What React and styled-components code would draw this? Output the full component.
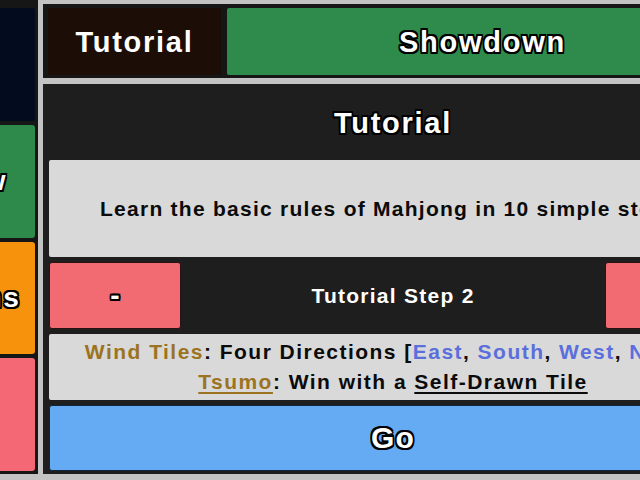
import React from 'react';
import styled, { createGlobalStyle, css } from 'styled-components';

const GlobalStyle = createGlobalStyle`
  html, body {
    margin: 0;
    padding: 0;
    width: 640px;
    height: 480px;
    overflow: hidden;
    background: #c3c3c3;
    font-family: "Liberation Sans", Arial, sans-serif;
  }
`;

const outline = css`
  text-shadow:
    -1.6px -1.6px 0 #000, 1.6px -1.6px 0 #000,
    -1.6px 1.6px 0 #000, 1.6px 1.6px 0 #000,
    0 -1.8px 0 #000, 0 1.8px 0 #000,
    -1.8px 0 0 #000, 1.8px 0 0 #000;
`;

const Page = styled.div`
  display: flex;
  gap: 5px;
  height: 480px;
  margin-left: -130px;
`;

const Sidebar = styled.nav`
  flex: 0 0 168px;
  height: 474px;
  box-sizing: border-box;
  padding: 8px 3px 3px;
  background: #161616;
  display: flex;
  flex-direction: column;
  gap: 4px;
`;

const SideButton = styled.button`
  flex: 1;
  border: none;
  border-radius: 3px;
  background: ${({ color }) => color};
  color: #fff;
  font-family: inherit;
  font-weight: bold;
  font-size: 28px;
  letter-spacing: 0.06em;
  ${outline}
`;

const Column = styled.div`
  flex: 0 0 700px;
  padding-top: 4px;
  display: flex;
  flex-direction: column;
  gap: 6px;
`;

const TabBar = styled.div`
  height: 74px;
  box-sizing: border-box;
  padding: 4px 5px 3px;
  background: #161616;
  display: flex;
  gap: 6px;
`;

const Tab = styled.div`
  flex: ${({ grow }) => (grow ? 1 : '0 0 173px')};
  background: ${({ color }) => color};
  border-radius: 2px;
  display: flex;
  align-items: center;
  justify-content: center;
  padding-top: 2px;
  color: #fff;
  font-weight: bold;
  font-size: 29px;
  letter-spacing: 0.06em;
  ${({ stroked }) => stroked && outline}
`;

const Panel = styled.main`
  height: 390px;
  box-sizing: border-box;
  padding: 0 6px 3px;
  background: #1e1e1e;
  display: flex;
  flex-direction: column;
  gap: 5px;
`;

const Heading = styled.h1`
  margin: 0;
  height: 71px;
  padding-top: 8px;
  box-sizing: border-box;
  display: flex;
  align-items: center;
  justify-content: center;
  color: #fff;
  font-size: 29px;
  letter-spacing: 0.06em;
  ${outline}
`;

const InfoBox = styled.div`
  height: ${({ h }) => h}px;
  background: #d9d9d9;
  border-radius: 2px;
  display: flex;
  flex-direction: column;
  align-items: center;
  justify-content: center;
  text-align: center;
  color: #0b0b0b;
  font-weight: bold;
  font-size: 21px;
  line-height: 30px;
  letter-spacing: ${({ spacing }) => spacing || '0.06em'};
  white-space: nowrap;
`;

const StepRow = styled.div`
  height: 67px;
  display: flex;
  align-items: stretch;
`;

const StepButton = styled.button`
  flex: 0 0 132px;
  border: 1px solid #2a1313;
  border-radius: 3px;
  background: #f26a72;
  color: #fff;
  font-family: inherit;
  font-weight: bold;
  font-size: 28px;
  ${outline}
`;

const StepLabel = styled.div`
  flex: 1;
  display: flex;
  align-items: center;
  justify-content: center;
  color: #fff;
  font-weight: bold;
  font-size: 21px;
  letter-spacing: 0.06em;
`;

const Key = styled.span`
  color: #9b7321;
  ${({ underline }) => underline && css`
    text-decoration: underline;
    text-decoration-thickness: 2px;
    text-underline-offset: 3px;
  `}
`;

const Dir = styled.span`
  color: #5b6fdc;
`;

const Term = styled.span`
  text-decoration: underline;
  text-decoration-thickness: 2px;
  text-underline-offset: 3px;
`;

const GoButton = styled.button`
  height: 66px;
  border: 1px solid #10263d;
  border-radius: 3px;
  background: #65abf3;
  color: #fff;
  font-family: inherit;
  font-weight: bold;
  font-size: 30px;
  letter-spacing: 0.04em;
  ${outline}
`;

const sideItems = [
  { label: '', color: '#020c1e' },
  { label: 'Review', color: '#2e8a4b' },
  { label: 'Missions', color: '#f7920d' },
  { label: '', color: '#f36874' },
];

export default function App() {
  return (
    <>
      <GlobalStyle />
      <Page>
        <Sidebar>
          {sideItems.map((item, i) => (
            <SideButton key={i} color={item.color}>{item.label}</SideButton>
          ))}
        </Sidebar>
        <Column>
          <TabBar>
            <Tab color="#1c0e06">Tutorial</Tab>
            <Tab color="#2e8b4b" grow stroked>Showdown</Tab>
          </TabBar>
          <Panel>
            <Heading>Tutorial</Heading>
            <InfoBox h={97}>Learn the basic rules of Mahjong in 10 simple steps.</InfoBox>
            <StepRow>
              <StepButton>-</StepButton>
              <StepLabel>Tutorial Step 2</StepLabel>
              <StepButton>+</StepButton>
            </StepRow>
            <InfoBox h={66} spacing="0.07em">
              <div>
                <Key>Wind Tiles</Key>: Four Directions [<Dir>East</Dir>, <Dir>South</Dir>, <Dir>West</Dir>, <Dir>North</Dir>]
              </div>
              <div>
                <Key underline>Tsumo</Key>: Win with a <Term>Self-Drawn Tile</Term>
              </div>
            </InfoBox>
            <GoButton>Go</GoButton>
          </Panel>
        </Column>
      </Page>
    </>
  );
}
